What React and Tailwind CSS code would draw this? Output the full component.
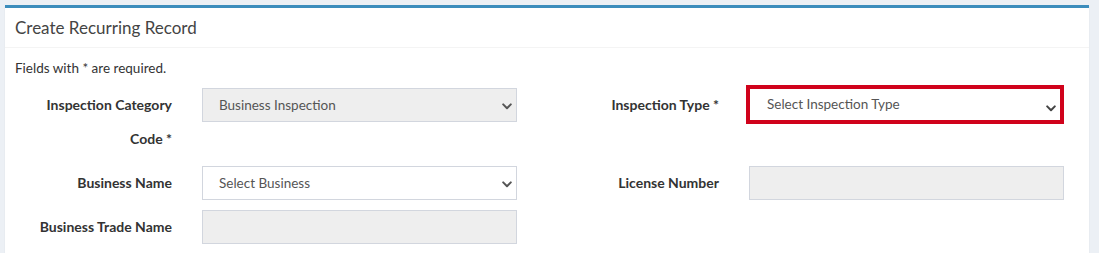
import React from "react";

const font = { fontFamily: "Lato, 'Liberation Sans', sans-serif" };

function Chevron({ className }) {
  return (
    <svg className={className} width="10" height="7" viewBox="0 0 10 7" fill="none">
      <path d="M1.2 1.4 L5 5.2 L8.8 1.4" stroke="currentColor" strokeWidth="2" strokeLinecap="round" strokeLinejoin="round" />
    </svg>
  );
}

function SelectBox({ text, disabled, highlight }) {
  if (highlight) {
    return (
      <div className="relative w-[318px] h-[39px] -ml-[3px] -mt-[3px] border-4 border-[#d0021b] bg-white flex items-center pl-[17px] text-[13.5px] text-[#555]">
        <span>{text}</span>
        <Chevron className="absolute right-[4px] top-[16px] text-[#444]" />
      </div>
    );
  }
  return (
    <div
      className={`relative w-[315px] h-[34px] border border-[#d2d6de] flex items-center pl-[16px] text-[13.5px] text-[#555] ${
        disabled ? "bg-[#eeeeee]" : "bg-white"
      }`}
    >
      <span>{text}</span>
      <Chevron className="absolute right-[4px] top-[14px] text-[#555]" />
    </div>
  );
}

function InputBox() {
  return <div className="w-[315px] h-[34px] border border-[#d2d6de] bg-[#eeeeee]" />;
}

function Label({ children }) {
  return (
    <div className="w-[187px] pr-[30px] text-right font-bold text-[14px] leading-[34px] text-[#333]">
      {children}
    </div>
  );
}

function Field({ label, children }) {
  return (
    <div className="flex w-[547px] shrink-0">
      <Label>{label}</Label>
      <div className="w-[315px]">{children}</div>
    </div>
  );
}

export default function App() {
  return (
    <div className="w-[1099px] h-[253px] overflow-hidden bg-[#ecf0f5] pt-[5px] pl-[5px]" style={font}>
      <div className="w-[1084px] h-[300px] bg-white border-t-[3px] border-[#3c8dbc] shadow-[0_1px_1px_rgba(0,0,0,0.1)]">
        <div className="h-[40px] border-b border-[#f4f4f4] px-[10px] flex items-center">
          <h3 className="text-[17px] text-[#444] leading-[20px]">Create Recurring Record</h3>
        </div>
        <div className="px-[10px] pt-[10px]">
          <p className="text-[13.5px] leading-[20px] text-[#333] mb-[10px]">Fields with * are required.</p>
          <div className="flex flex-col gap-[10px]">
            <div className="flex">
              <Field label={<>Inspection Category<br />Code *</>}>
                <SelectBox text="Business Inspection" disabled />
              </Field>
              <Field label="Inspection Type *">
                <SelectBox text="Select Inspection Type" highlight />
              </Field>
            </div>
            <div className="flex">
              <Field label="Business Name">
                <SelectBox text="Select Business" />
              </Field>
              <Field label="License Number">
                <InputBox />
              </Field>
            </div>
            <div className="flex">
              <Field label="Business Trade Name">
                <InputBox />
              </Field>
            </div>
          </div>
        </div>
      </div>
    </div>
  );
}
